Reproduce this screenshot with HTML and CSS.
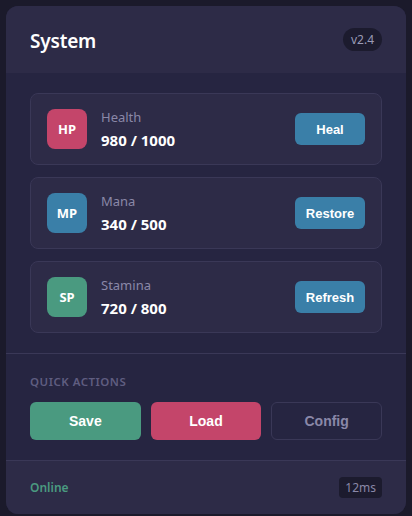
FILE: index.html
```html
<!DOCTYPE html>
<html>
<head>
<meta charset="utf-8">
<link rel="stylesheet" href="styles.css">
</head>
<body>
<div class="panel">
  <header class="panel-head">
    <h1 class="title">System</h1>
    <span class="version">v2.4</span>
  </header>
  <section class="stats">
    <div class="stat">
      <div class="stat-icon hp">HP</div>
      <div class="stat-info">
        <div class="stat-label">Health</div>
        <div class="stat-value">980 / 1000</div>
      </div>
      <button class="stat-btn">Heal</button>
    </div>
    <div class="stat">
      <div class="stat-icon mp">MP</div>
      <div class="stat-info">
        <div class="stat-label">Mana</div>
        <div class="stat-value">340 / 500</div>
      </div>
      <button class="stat-btn">Restore</button>
    </div>
    <div class="stat">
      <div class="stat-icon sp">SP</div>
      <div class="stat-info">
        <div class="stat-label">Stamina</div>
        <div class="stat-value">720 / 800</div>
      </div>
      <button class="stat-btn">Refresh</button>
    </div>
  </section>
  <section class="actions">
    <div class="actions-label">QUICK ACTIONS</div>
    <div class="actions-row">
      <button class="act save">Save</button>
      <button class="act load">Load</button>
      <button class="act config">Config</button>
    </div>
  </section>
  <footer class="panel-foot">
    <span class="status">Online</span>
    <span class="ping">12ms</span>
  </footer>
</div>
</body>
</html>
```
FILE: styles.css
```css
* { box-sizing: border-box; }
html, body { margin: 0; padding: 0; }
body {
  background: #1b1a2b;
  padding: 6px;
  font-family: "Noto Sans", "Open Sans", sans-serif;
  color: #ffffff;
}
.panel {
  width: 400px;
  height: 508px;
  background: #262541;
  border-radius: 12px;
  overflow: hidden;
  display: flex;
  flex-direction: column;
}
.panel-head {
  height: 67px;
  flex: none;
  background: #2d2b47;
  display: flex;
  align-items: center;
  justify-content: space-between;
  padding: 0 24px;
}
.title {
  margin: 0;
  font-size: 19px;
  font-weight: 600;
  color: #ffffff;
  line-height: 24px;
  letter-spacing: -0.2px;
  padding-top: 2px;
}
.version {
  background: #1c1b2e;
  color: #9a9ab5;
  font-size: 12px;
  height: 23px;
  line-height: 23px;
  padding: 0 8px;
  border-radius: 12px;
}
.stats {
  flex: none;
  padding: 20px 24px;
  display: flex;
  flex-direction: column;
  gap: 12px;
  border-bottom: 1px solid #3a3857;
}
.stat {
  height: 72px;
  background: #2d2b47;
  border: 1px solid #3a3857;
  border-radius: 8px;
  display: flex;
  align-items: center;
  padding: 0 16px;
}
.stat-icon {
  width: 40px;
  height: 40px;
  border-radius: 8px;
  display: flex;
  align-items: center;
  justify-content: center;
  font-size: 13px;
  font-weight: 700;
  color: #ffffff;
  flex: none;
}
.hp { background: #c4456a; }
.mp { background: #3a7fa8; }
.sp { background: #4a9a80; }
.stat-info {
  flex: 1;
  margin-left: 14px;
  display: flex;
  flex-direction: column;
  gap: 3.5px;
}
.stat-label {
  font-size: 13px;
  color: #8a88a8;
  line-height: 18px;
}
.stat-value {
  font-size: 15px;
  font-weight: 700;
  color: #ffffff;
  line-height: 20px;
}
.stat-btn {
  width: 70px;
  height: 32px;
  border: none;
  border-radius: 6px;
  background: #3a7fa8;
  color: #ffffff;
  font-family: "Liberation Sans", Arial, sans-serif;
  font-size: 13px;
  font-weight: 700;
  padding: 0;
}
.actions {
  flex: none;
  padding: 20px 24px;
  border-bottom: 1px solid #3a3857;
}
.actions-label {
  font-size: 11.5px;
  letter-spacing: 0.5px;
  color: #5f5d80;
  font-weight: 600;
  line-height: 16px;
}
.actions-row {
  margin-top: 12px;
  display: grid;
  grid-template-columns: 1fr 1fr 1fr;
  gap: 10px;
}
.act {
  height: 38px;
  border-radius: 6px;
  border: none;
  color: #ffffff;
  font-family: "Liberation Sans", Arial, sans-serif;
  font-size: 14px;
  font-weight: 700;
  padding: 0;
}
.save { background: #4a9a80; }
.load { background: #c4456a; }
.config {
  background: transparent;
  border: 1px solid #3a3857;
  color: #8a88a8;
}
.panel-foot {
  flex: 1;
  background: #2d2b47;
  display: flex;
  align-items: center;
  justify-content: space-between;
  padding: 0 24px;
}
.status {
  color: #4a9a80;
  font-size: 12px;
  font-weight: 600;
}
.ping {
  background: #1c1b2e;
  color: #8a88a8;
  font-size: 12px;
  height: 21px;
  line-height: 21px;
  padding: 0 6px;
  border-radius: 4px;
}
```
